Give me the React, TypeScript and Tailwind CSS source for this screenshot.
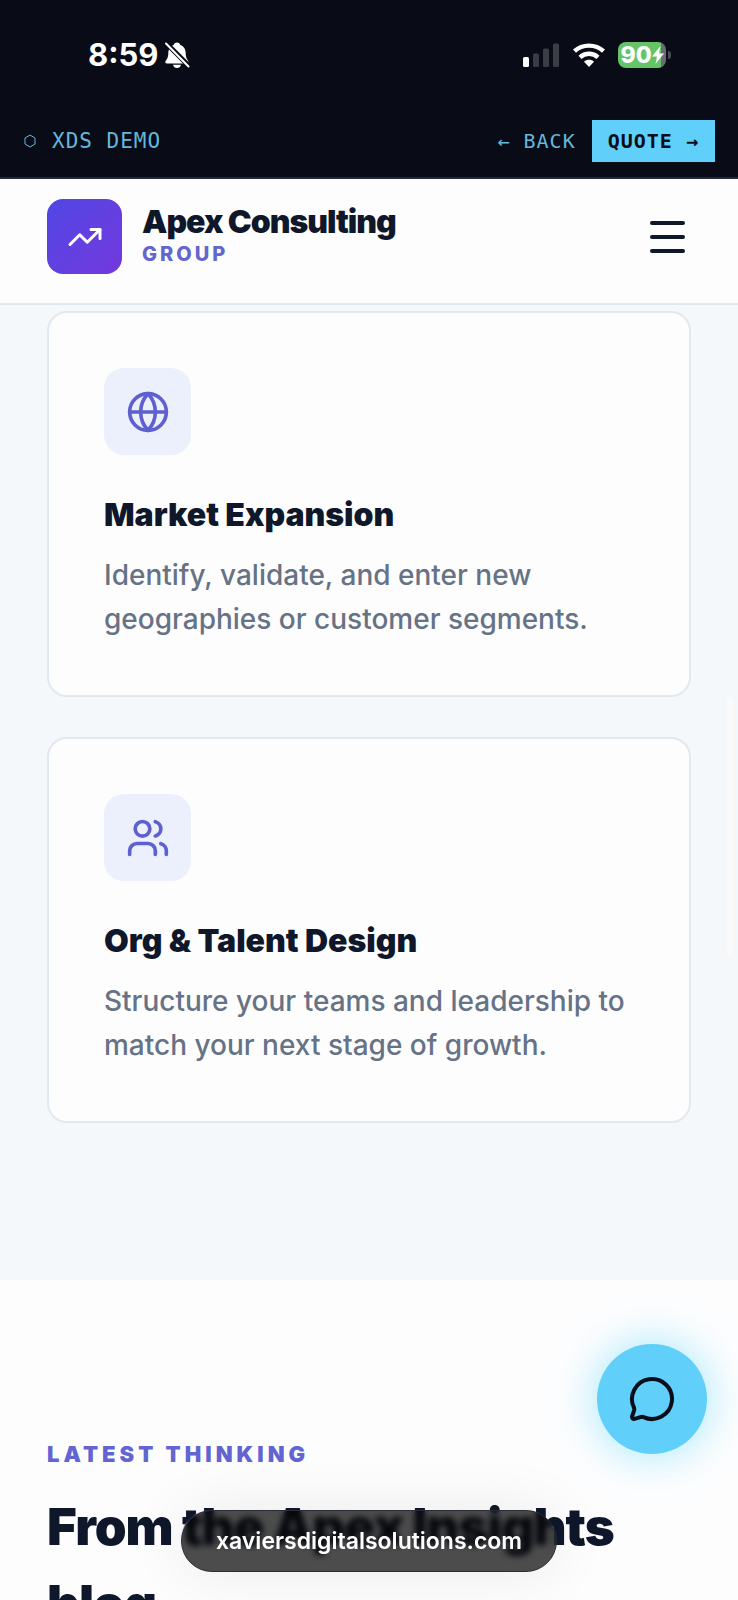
import { Globe, MessageCircle, TrendingUp, Users } from "lucide-react";

const SERVICES = [
  {
    icon: Globe,
    title: "Market Expansion",
    desc: "Identify, validate, and enter new geographies or customer segments.",
  },
  {
    icon: Users,
    title: "Org & Talent Design",
    desc: "Structure your teams and leadership to match your next stage of growth.",
  },
];

function BellOff() {
  return (
    <svg viewBox="0 0 26 28" className="w-[26px] h-7" aria-hidden="true">
      <path
        d="M13 1.5c1.8 0 3 1 3.3 2.5 3.700 1.200 5.400 4.500 5.400 8.500 0 4.500 1.800 6 2.600 7.700.6 1.300-.2 2.300-1.500 2.300H3c-1.300 0-2.100-1-1.500-2.300.9-1.700 2.800-3.200 2.800-7.700 0-4 1.700-7.300 5.400-8.500C10 2.500 11.200 1.500 13 1.500ZM9 23.800h8c-.4 2-2 3.300-4 3.300s-3.600-1.300-4-3.300Z"
        fill="#fff"
      />
      <path d="M0 0 27 27" stroke="#090c17" strokeWidth="5" />
      <path d="M2 2.500 24.500 25.500" stroke="#fff" strokeWidth="2" strokeLinecap="round" />
    </svg>
  );
}

function StatusBar() {
  return (
    <div className="flex items-center justify-between h-[110px] pl-[88px] pr-[67px] text-white">
      <div className="flex items-center gap-1.5">
        <span className="text-[31px] leading-9 font-bold">8:59</span>
        <BellOff />
      </div>
      <div className="flex items-center gap-3">
        <svg viewBox="0 0 38 24" className="w-[38px] h-6" aria-hidden="true">
          <rect x="1" y="14" width="6" height="10" rx="1.500" fill="#fff" />
          <rect x="11" y="10.500" width="6" height="13.500" rx="1.500" fill="#3a3c46" />
          <rect x="21" y="5.500" width="6" height="18.500" rx="1.500" fill="#3a3c46" />
          <rect x="31" y="0.500" width="6" height="23.500" rx="1.500" fill="#3a3c46" />
        </svg>
        <svg viewBox="0 0 34 24" className="w-[34px] h-6" aria-hidden="true">
          <g fill="none" stroke="#fff" strokeWidth="4.400">
            <path d="M2.500 8.200C10.500.8 23.500.8 31.500 8.200" />
            <path d="M8 14.300c5-4.700 13-4.700 18 0" />
          </g>
          <path d="M17 24l-5-5.200c2.800-2.600 7.200-2.600 10 0Z" fill="#fff" />
        </svg>
        <div className="flex items-center gap-0.5">
          <div className="flex items-center justify-center w-12 h-[26px] rounded-lg bg-[linear-gradient(90deg,#65c466_90%,#6b6d74_90%)]">
            <span className="text-[23px] leading-6 font-extrabold">90</span>
            <svg viewBox="0 0 12 18" className="w-3 h-[18px]" aria-hidden="true">
              <path d="M8.500 0 0 10.500h5L3.500 18 12 7.500H7Z" fill="#fff" />
            </svg>
          </div>
          <span className="w-[3px] h-2 rounded-r-full bg-[#4a4c55]" />
        </div>
      </div>
    </div>
  );
}

function DemoBar() {
  return (
    <div className="flex items-center justify-between h-[69px] pl-6 pr-[23px] pb-[5px] border-b-2 border-[#1c2c3a] font-['DejaVu_Sans_Mono',monospace] text-[20px] leading-6 tracking-[1px]">
      <a href="#demo" className="flex items-center gap-4 text-[21px] text-[#65b8dc]">
        <svg viewBox="0 0 12 14" className="w-3 h-3.5" aria-hidden="true">
          <path d="M6 1 11 4v6l-5 3-5-3V4Z" fill="none" stroke="currentColor" />
        </svg>
        XDS DEMO
      </a>
      <div className="flex items-center gap-4">
        <a href="#back" className="text-[#65b8dc]">← BACK</a>
        <a href="#quote" className="px-4 py-[9px] bg-[#60cffa] text-[#0a0e1a] font-bold">
          QUOTE →
        </a>
      </div>
    </div>
  );
}

function SiteHeader() {
  return (
    <header className="flex items-center justify-between px-[47px] pt-5 pb-[29px] bg-[#fdfdfe] border-b-2 border-[#e2e8f0]">
      <a href="#home" className="flex items-center gap-5">
        <span className="flex items-center justify-center size-[75px] rounded-2xl bg-gradient-to-br from-[#4f46e5] to-[#7338dc]">
          <TrendingUp className="size-9 text-white" />
        </span>
        <span className="flex flex-col gap-0.5 pb-1">
          <span className="text-[32px] leading-9 font-black tracking-[-1px] text-[#0f172a]">
            Apex Consulting
          </span>
          <span className="text-[20px] leading-6 font-extrabold tracking-[3px] text-[#6366cc]">
            GROUP
          </span>
        </span>
      </a>
      <button type="button" aria-label="Open menu" className="flex flex-col gap-2.5 px-1.5">
        <span className="w-[35px] h-1 rounded-full bg-[#0f172a]" />
        <span className="w-[35px] h-1 rounded-full bg-[#0f172a]" />
        <span className="w-[35px] h-1 rounded-full bg-[#0f172a]" />
      </button>
    </header>
  );
}

export default function App() {
  return (
    <div className="relative flex flex-col h-screen overflow-hidden bg-[#fdfdfe] font-['Inter',sans-serif]">
      <div className="shrink-0 bg-[#090c17]">
        <StatusBar />
        <DemoBar />
      </div>
      <SiteHeader />

      <main className="flex-1 min-h-0 overflow-hidden">
        <section className="flex flex-col gap-10 px-[47px] pt-1.5 pb-[157px] bg-[#f5f8fa]">
          {SERVICES.map((item) => (
            <article
              key={item.title}
              className="p-[55px] pb-[54px] rounded-[20px] bg-[#fdfdfe] border-2 border-[#e2e8f0]"
            >
              <div className="flex items-center justify-center size-[87px] mb-10 rounded-[20px] bg-[#ecf0fc]">
                <item.icon className="size-11 text-[#5f60cf]" />
              </div>
              <h3 className="mb-[18px] text-[32px] leading-10 font-black text-[#0f172a]">
                {item.title}
              </h3>
              <p className="text-[28px] leading-[44px] font-medium text-[#667285]">{item.desc}</p>
            </article>
          ))}
        </section>

        <section className="px-[47px] pt-40">
          <p className="mb-5 text-[22px] leading-7 font-black tracking-[4px] text-[#6264d2]">
            LATEST THINKING
          </p>
          <h2 className="text-[51px] leading-[77px] font-black tracking-[-1px] text-[#0f172a]">
            From the Apex Insights blog
          </h2>
        </section>
      </main>

      <div className="absolute right-[5px] top-[697px] w-1.5 h-[258px] rounded-full bg-[#fafafa]" />

      <button
        type="button"
        aria-label="Open chat"
        className="absolute right-[31px] bottom-[146px] flex items-center justify-center size-[110px] rounded-full bg-[#60cffa] text-[#0a0e1a] shadow-[0_0_44px_rgba(96,217,250,0.6)]"
      >
        <MessageCircle className="size-12" />
      </button>

      <div className="absolute bottom-7 left-1/2 -translate-x-1/2 flex items-center justify-center h-[62px] px-[34px] rounded-full border border-[#2a2c38] bg-black/70 backdrop-blur-[3px] shadow-[0_0_60px_rgba(0,0,0,0.08)]">
        <span className="text-[23px] leading-7 font-semibold text-white">
          xaviersdigitalsolutions.com
        </span>
      </div>
    </div>
  );
}
